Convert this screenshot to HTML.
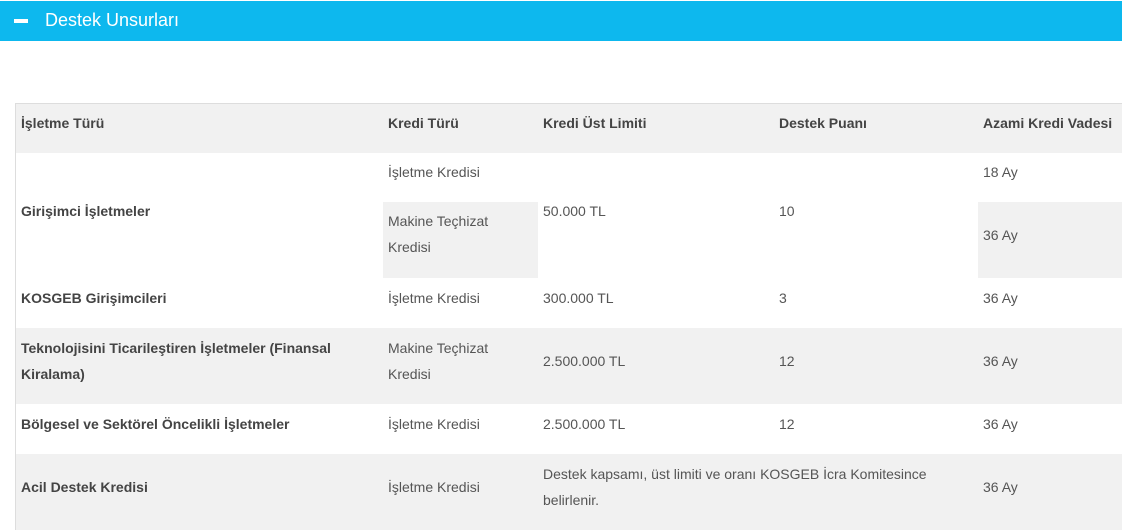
<!DOCTYPE html>
<html><head><meta charset="utf-8"><style>
body{margin:0;width:1122px;height:532px;background:#fff;position:relative;overflow:hidden;font-family:"Liberation Sans","DejaVu Sans",sans-serif;font-size:14px;color:#555}
.bar{position:absolute;left:0;top:1px;width:1122px;height:40px;background:#0db8ee}
.bar .m{position:absolute;left:14px;top:18px;width:14px;height:4px;background:#fff}
.bar .t{position:absolute;left:45px;top:9px;font-size:18px;color:#fff}
.tbl{position:absolute;left:15px;top:103px;width:1107px;height:427px;border:1px solid #ddd;border-right:none;box-sizing:border-box}
.g{position:absolute;background:#f1f1f1}
.tx{position:absolute;line-height:26px;white-space:nowrap}
b{font-weight:bold;color:#444}
</style></head><body>
<div class="bar"><div class="m"></div><div class="t">Destek Unsurları</div></div>
<div class="tbl"></div>
<div class="g" style="left:16px;top:104px;width:1106px;height:49px"></div>
<div class="g" style="left:383px;top:202px;width:155px;height:76px"></div>
<div class="g" style="left:978px;top:202px;width:144px;height:76px"></div>
<div class="g" style="left:16px;top:328px;width:1106px;height:76px"></div>
<div class="g" style="left:16px;top:454px;width:1106px;height:76px"></div>

<div class="tx" style="left:21px;top:110px"><b>İşletme Türü</b></div>
<div class="tx" style="left:388px;top:110px"><b>Kredi Türü</b></div>
<div class="tx" style="left:543px;top:110px"><b>Kredi Üst Limiti</b></div>
<div class="tx" style="left:779px;top:110px"><b>Destek Puanı</b></div>
<div class="tx" style="left:983px;top:110px"><b>Azami Kredi Vadesi</b></div>

<div class="tx" style="left:21px;top:198px"><b>Girişimci İşletmeler</b></div>
<div class="tx" style="left:388px;top:159px">İşletme Kredisi</div>
<div class="tx" style="left:388px;top:208px">Makine Teçhizat<br>Kredisi</div>
<div class="tx" style="left:543px;top:198px">50.000 TL</div>
<div class="tx" style="left:779px;top:198px">10</div>
<div class="tx" style="left:983px;top:159px">18 Ay</div>
<div class="tx" style="left:983px;top:222px">36 Ay</div>

<div class="tx" style="left:21px;top:285px"><b>KOSGEB Girişimcileri</b></div>
<div class="tx" style="left:388px;top:285px">İşletme Kredisi</div>
<div class="tx" style="left:543px;top:285px">300.000 TL</div>
<div class="tx" style="left:779px;top:285px">3</div>
<div class="tx" style="left:983px;top:285px">36 Ay</div>

<div class="tx" style="left:21px;top:335px"><b>Teknolojisini Ticarileştiren İşletmeler (Finansal<br>Kiralama)</b></div>
<div class="tx" style="left:388px;top:335px">Makine Teçhizat<br>Kredisi</div>
<div class="tx" style="left:543px;top:348px">2.500.000 TL</div>
<div class="tx" style="left:779px;top:348px">12</div>
<div class="tx" style="left:983px;top:348px">36 Ay</div>

<div class="tx" style="left:21px;top:411px"><b>Bölgesel ve Sektörel Öncelikli İşletmeler</b></div>
<div class="tx" style="left:388px;top:411px">İşletme Kredisi</div>
<div class="tx" style="left:543px;top:411px">2.500.000 TL</div>
<div class="tx" style="left:779px;top:411px">12</div>
<div class="tx" style="left:983px;top:411px">36 Ay</div>

<div class="tx" style="left:21px;top:474px"><b>Acil Destek Kredisi</b></div>
<div class="tx" style="left:388px;top:474px">İşletme Kredisi</div>
<div class="tx" style="left:543px;top:461px">Destek kapsamı, üst limiti ve oranı KOSGEB İcra Komitesince<br>belirlenir.</div>
<div class="tx" style="left:983px;top:474px">36 Ay</div>
</body></html>
